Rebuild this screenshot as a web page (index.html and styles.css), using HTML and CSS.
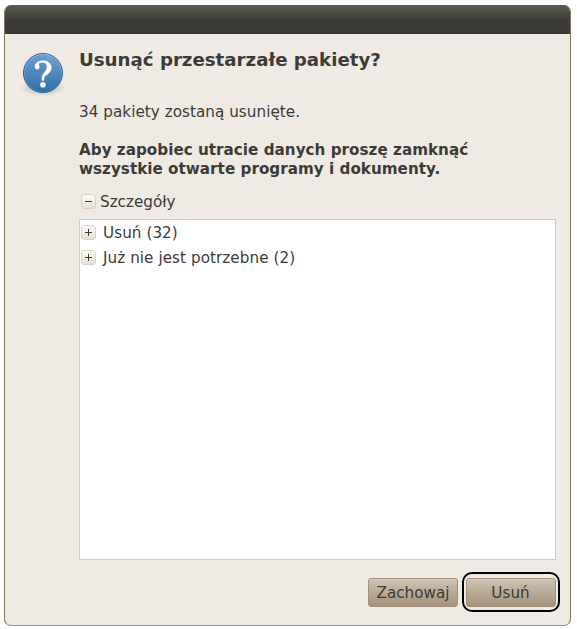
FILE: index.html
```html
<!DOCTYPE html>
<html lang="pl">
<head>
<meta charset="utf-8">
<title>Usunąć przestarzałe pakiety?</title>
<link rel="stylesheet" href="styles.css">
</head>
<body>
<div class="window">
  <div class="titlebar"></div>
  <div class="content">
    <svg class="icon" width="48" height="48" viewBox="0 0 48 48">
      <defs>
        <linearGradient id="ball" x1="0" y1="0" x2="0" y2="1">
          <stop offset="0" stop-color="#6fa0d2"/>
          <stop offset="1" stop-color="#2f6fa5"/>
        </linearGradient>
        <linearGradient id="ring" x1="0" y1="0" x2="0" y2="1">
          <stop offset="0" stop-color="#8fb5e0"/>
          <stop offset="1" stop-color="#3d7cb2"/>
        </linearGradient>
        <radialGradient id="shade">
          <stop offset="0" stop-color="#000" stop-opacity=".3"/>
          <stop offset="1" stop-color="#000" stop-opacity="0"/>
        </radialGradient>
      </defs>
      <ellipse cx="24" cy="39" rx="23" ry="8" fill="url(#shade)"/>
      <circle cx="24" cy="24" r="19.5" fill="url(#ball)" stroke="#2b649b"/>
      <circle cx="24" cy="24" r="18.500" fill="none" stroke="url(#ring)"/>
      <path d="M16 17.700C16 14 19.500 11.700 24 11.700C29 11.700 32.300 14.500 32.300 18.500C32.300 22.500 29.500 24.500 27 26.300C25.300 27.700 24.900 29 24.800 31.500H22.900C22.800 28 23.300 26.200 24.800 24.200C26.700 22 28 20.800 28 18.100C28 15 26.300 13.300 23.600 13.300C21 13.300 19.300 14.300 19.300 15.300C19.300 16.200 20.300 16.600 20.300 18C20.300 19.300 19.400 20.200 18.200 20.200C16.800 20.200 16 19.200 16 17.700Z" fill="#fff" stroke="#fff" stroke-width=".5"/>
      <circle cx="23.900" cy="35.700" r="2.800" fill="#fff"/>
    </svg>
    <div class="main">
      <h1 class="heading">Usunąć przestarzałe pakiety?</h1>
      <p class="summary">34 pakiety zostaną usunięte.</p>
      <p class="warning">Aby zapobiec utracie danych proszę zamknąć<br>wszystkie otwarte programy i dokumenty.</p>
      <div class="details"><span class="toggle"></span><span>Szczegóły</span></div>
      <div class="tree">
        <div class="row"><span class="toggle plus"></span><span>Usuń (32)</span></div>
        <div class="row"><span class="toggle plus"></span><span>Już nie jest potrzebne (2)</span></div>
      </div>
    </div>
  </div>
  <div class="actions">
    <button class="button keep">Zachowaj</button>
    <div class="focus"><button class="button">Usuń</button></div>
  </div>
</div>
</body>
</html>
```
FILE: styles.css
```css
* { box-sizing: border-box; }
body {
  margin: 0;
  padding: 5px 5px 3px 4px;
  height: 629px;
  background: #fff;
  font: 15.2px/19px "DejaVu Sans", sans-serif;
  color: #3c3b37;
}
.window {
  height: 621px;
  width: 567px;
  display: flex;
  flex-direction: column;
  background: #efebe4;
  border: 1px solid #857759;
  border-top: 0;
  border-bottom-color: #a4906f;
  border-radius: 7px;
  overflow: hidden;
}
.titlebar {
  flex: none;
  height: 29px;
  background: linear-gradient(#5b5a52, #3c3b37 55%, #3c3b37);
  border-bottom: 1px solid #353029;
}
.content {
  display: flex;
  flex: none;
  height: 526px;
  padding: 14px 14px 0 14px;
  border-top: 1px solid #f7f0ec;
}
.icon { flex: none; margin-right: 12px; }
.main {
  flex: 1;
  display: flex;
  flex-direction: column;
  white-space: nowrap;
}
.heading { margin: 0; font-size: 18.2px; line-height: 22px; font-weight: bold; }
.summary { margin: 32px 0 19px; letter-spacing: .04px; }
.warning { margin: 0; font-weight: bold; letter-spacing: .01px; }
.details {
  display: flex;
  align-items: flex-start;
  height: 19px;
  gap: 4px;
  margin: 14px 0 7px;
  padding-left: 2px;
}
.details .toggle { margin-top: 1px; }
.tree {
  flex: 1;
  width: 477px;
  background: #fff;
  border: 1px solid #d6cab7;
  letter-spacing: .06px;
}
.row {
  display: flex;
  align-items: flex-start;
  height: 25px;
  gap: 7px;
  padding: 4px 0 0 1px;
}
.row .toggle { margin-top: 1px; }
.toggle {
  position: relative;
  width: 15px;
  height: 15px;
  border: 1px solid #dcd3c3;
  border-radius: 3px;
  background: linear-gradient(#fcfbfa, #e6dfd3);
}
.toggle::before, .plus::after {
  content: "";
  position: absolute;
  left: 3px;
  top: 6px;
  width: 7px;
  height: 1px;
  background: #3c3b37;
}
.plus::after { left: 6px; top: 3px; width: 1px; height: 7px; }
.actions {
  display: flex;
  justify-content: flex-end;
  align-items: flex-start;
  height: 40px;
  margin-top: 12px;
  padding-right: 10px;
  gap: 4px;
}
.button {
  width: 90px;
  height: 29px;
  padding: 1px 1px 0 0;
  border: 1px solid #a08d78;
  border-radius: 3px;
  background: linear-gradient(#cfc3b2, #b9aa95 50%, #a3927a);
  box-shadow: inset 0 1px #dacfbf;
  color: #3c3b37;
  font: inherit;
}
.keep { margin-top: 6px; padding-right: 0; }
.focus {
  height: 40px;
  padding: 4px 2px;
  border: 2px solid #000;
  border-radius: 10px;
}
```
